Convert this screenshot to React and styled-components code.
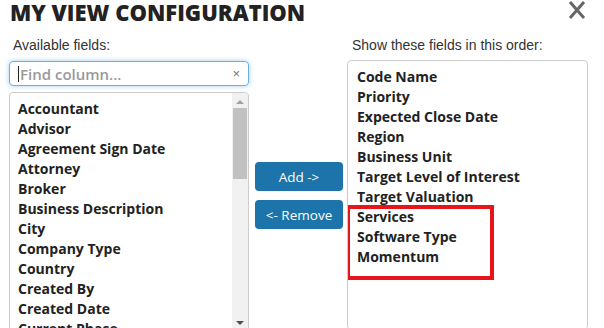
import React from 'react';
import styled, { createGlobalStyle } from 'styled-components';

const GlobalStyle = createGlobalStyle`
  html, body {
    margin: 0;
    padding: 0;
    background: #fff;
    overflow: hidden;
  }
  * {
    box-sizing: border-box;
  }
`;

const Dialog = styled.div`
  width: 604px;
  height: 328px;
  padding: 0 0 0 9px;
  position: relative;
  font-family: 'Open Sans', 'Liberation Sans', sans-serif;
  color: #222;
`;

const Header = styled.div`
  display: flex;
  justify-content: space-between;
  align-items: flex-start;
  height: 24px;
  padding-right: 18px;
`;

const Title = styled.h2`
  margin: -3px 0 0 1px;
  font-size: 22px;
  line-height: 30px;
  font-weight: 800;
  color: #222;
`;

const CloseButton = styled.button`
  border: none;
  background: none;
  padding: 0;
  margin-top: 1px;
  width: 18px;
  height: 18px;
  cursor: pointer;
  display: flex;
`;

const Body = styled.div`
  display: flex;
  margin-top: 13px;
`;

const Column = styled.div`
  display: flex;
  flex-direction: column;
  width: ${props => props.width}px;
`;

const Label = styled.label`
  font-family: 'Liberation Sans', Arial, sans-serif;
  font-size: 14px;
  line-height: 16px;
  color: #333;
  padding-left: ${props => props.indent || 4}px;
  margin-bottom: ${props => props.gap || 8}px;
`;

const SearchBox = styled.div`
  height: 25px;
  border: 1px solid #66afe9;
  border-radius: 4px;
  box-shadow: 0 0 5px rgba(102, 175, 233, 0.6);
  display: flex;
  align-items: center;
  padding: 0 8px 0 8px;
  margin-bottom: 6px;
`;

const Caret = styled.span`
  width: 1px;
  height: 16px;
  background: #222;
  margin-right: 1px;
`;

const Placeholder = styled.span`
  flex: 1;
  font-size: 15px;
  font-weight: 600;
  color: #999;
`;

const Clear = styled.span`
  font-family: 'Liberation Sans', Arial, sans-serif;
  font-size: 13px;
  color: #777;
  line-height: 1;
`;

const ListBox = styled.div`
  position: relative;
  height: ${props => props.height}px;
  border: 1px solid #ccc;
  border-radius: 4px;
  display: flex;
  overflow: hidden;
  background: #fff;
`;

const Items = styled.ul`
  list-style: none;
  margin: 0;
  padding: 6px 0 0 ${props => props.indent}px;
  flex: 1;
`;

const Item = styled.li`
  font-size: 14px;
  line-height: 20px;
  font-weight: 700;
  color: #222;
  white-space: nowrap;
`;

const ScrollBar = styled.div`
  width: 16px;
  background: #f1f1f1;
  display: flex;
  flex-direction: column;
  align-items: center;
  padding: 0 1px;
`;

const Arrow = styled.div`
  width: 0;
  height: 0;
  border-left: 4px solid transparent;
  border-right: 4px solid transparent;
  ${props => props.down
    ? 'border-top: 4px solid #505050;'
    : 'border-bottom: 4px solid #a3a3a3;'}
  margin: ${props => (props.down ? 'auto 0 6px' : '7px 0 4px')};
`;

const Thumb = styled.div`
  width: 14px;
  height: 71px;
  background: #c1c1c1;
`;

const ButtonStack = styled.div`
  display: flex;
  flex-direction: column;
  gap: 9px;
  width: 88px;
  margin: 125px 4px 0 6px;
`;

const MoveButton = styled.button`
  height: 29px;
  border: none;
  border-radius: 4px;
  background: #1c74ab;
  color: #fff;
  font-family: 'Open Sans', sans-serif;
  font-size: 13.5px;
  cursor: pointer;
  padding: 0;
`;

const Highlight = styled.div`
  position: absolute;
  left: -2px;
  top: 144px;
  width: 148px;
  height: 75px;
  border: 4px solid #e8141c;
  pointer-events: none;
`;

const available = [
  'Accountant',
  'Advisor',
  'Agreement Sign Date',
  'Attorney',
  'Broker',
  'Business Description',
  'City',
  'Company Type',
  'Country',
  'Created By',
  'Created Date',
  'Current Phase',
];

const selected = [
  'Code Name',
  'Priority',
  'Expected Close Date',
  'Region',
  'Business Unit',
  'Target Level of Interest',
  'Target Valuation',
  'Services',
  'Software Type',
  'Momentum',
];

export default function App() {
  return (
    <Dialog>
      <GlobalStyle />
      <Header>
        <Title>MY VIEW CONFIGURATION</Title>
        <CloseButton aria-label="Close">
          <svg width="18" height="18" viewBox="0 0 18 18">
            <path d="M2 1 L16 17 M16 1 L2 17" stroke="#666" strokeWidth="3" />
          </svg>
        </CloseButton>
      </Header>
      <Body>
        <Column width={240}>
          <Label>Available fields:</Label>
          <SearchBox>
            <Caret />
            <Placeholder>Find column...</Placeholder>
            <Clear>×</Clear>
          </SearchBox>
          <ListBox height={240}>
            <Items indent={8}>
              {available.map(name => <Item key={name}>{name}</Item>)}
            </Items>
            <ScrollBar>
              <Arrow />
              <Thumb />
              <Arrow down />
            </ScrollBar>
          </ListBox>
        </Column>
        <ButtonStack>
          <MoveButton>Add -&gt;</MoveButton>
          <MoveButton>&lt;- Remove</MoveButton>
        </ButtonStack>
        <Column width={241}>
          <Label indent={5} gap={7}>Show these fields in this order:</Label>
          <ListBox height={270}>
            <Items indent={9}>
              {selected.map(name => <Item key={name}>{name}</Item>)}
            </Items>
            <Highlight />
          </ListBox>
        </Column>
      </Body>
    </Dialog>
  );
}
